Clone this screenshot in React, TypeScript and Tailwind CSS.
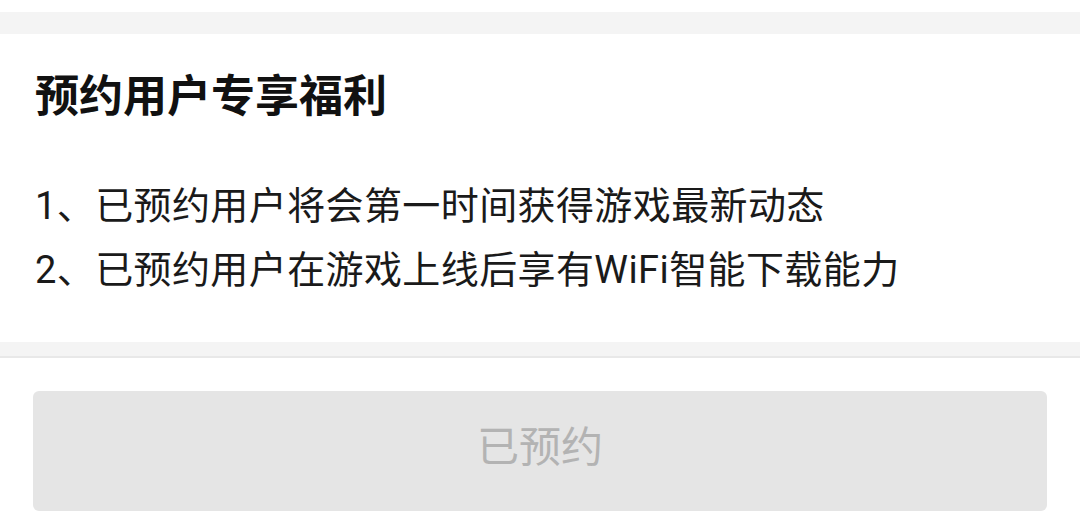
import React from "react";

export default function App() {
  const font = { fontFamily: 'Roboto, "Noto Sans CJK SC", "Noto Sans", sans-serif' };
  return (
    <div className="w-[1080px] h-[514px] bg-white overflow-hidden flex flex-col" style={font}>
      <div className="h-[12px] bg-white" />
      <div className="h-[22px] bg-[#f4f4f4]" />
      <div className="h-[308px] bg-white pl-[35px] flex flex-col">
        <h1 className="mt-[41px] text-[44px] leading-[44px] font-bold text-[#111]">预约用户专享福利</h1>
        <div className="mt-[55px] text-[38px] leading-[64px] tracking-[0.4px] text-[#1a1a1a]">
          <p>1、已预约用户将会第一时间获得游戏最新动态</p>
          <p>2、已预约用户在游戏上线后享有WiFi智能下载能力</p>
        </div>
      </div>
      <div className="h-[16px] bg-[#f4f4f4] border-b-[2px] border-[#e8e8e8] shadow-[0_1px_2px_rgba(0,0,0,0.05)]" />
      <div className="flex-1 bg-white px-[33px] pt-[33px]">
        <div className="h-[120px] w-full rounded-[6px] bg-[#e5e5e5] flex items-center justify-center pb-[6px]">
          <span className="text-[42px] leading-[42px] text-[#b3b3b3]">已预约</span>
        </div>
      </div>
    </div>
  );
}
